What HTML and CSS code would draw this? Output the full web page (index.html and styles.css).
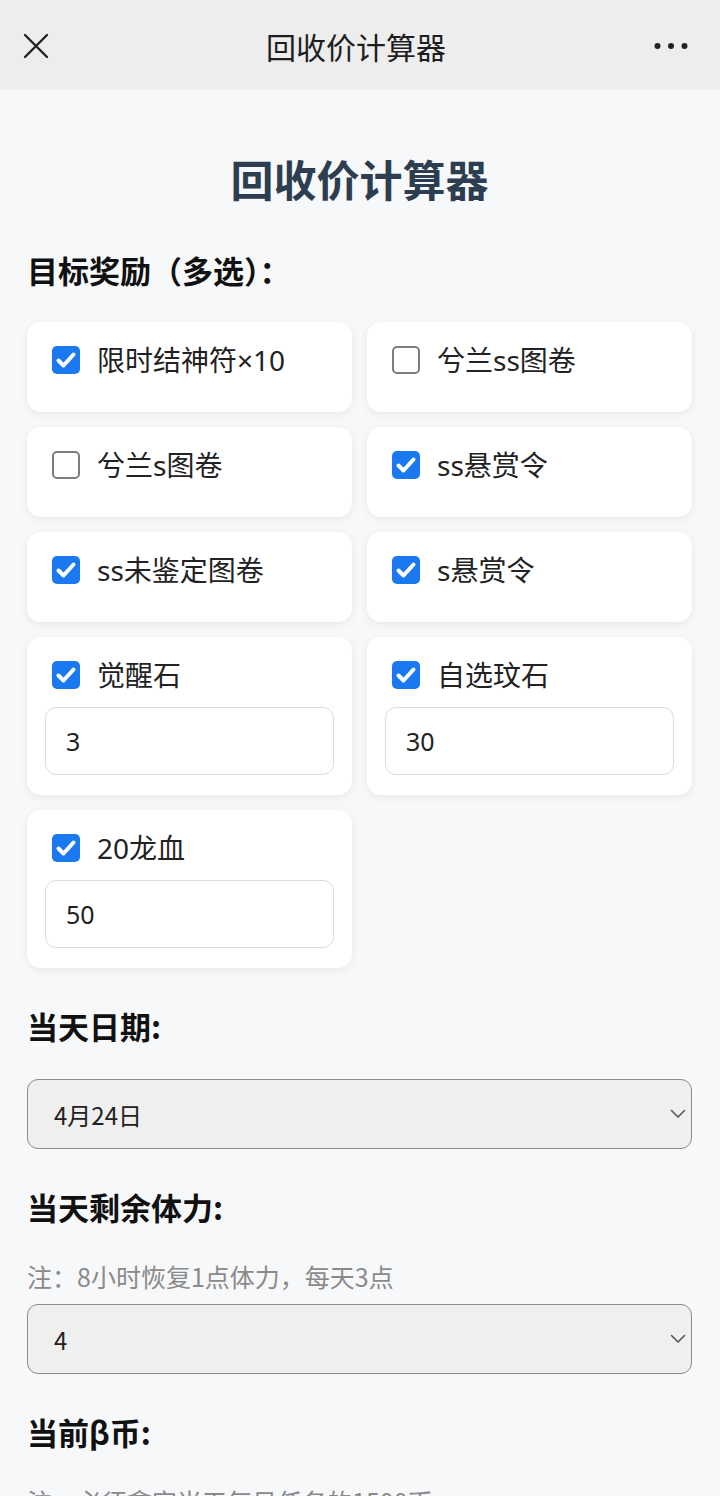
FILE: index.html
```html
<!DOCTYPE html>
<html lang="zh-CN">
<head>
<meta charset="utf-8">
<title>回收价计算器</title>
<link rel="stylesheet" href="styles.css">
</head>
<body>
<header class="topbar">
  <svg class="close-icon" width="28" height="28" viewBox="0 0 28 28"><path d="M3 3 L25 25 M25 3 L3 25" stroke="#222" stroke-width="2.4" stroke-linecap="round" fill="none"/></svg>
  <div class="topbar-title">回收价计算器</div>
  <svg class="more-icon" width="34" height="8" viewBox="0 0 34 8"><circle cx="3.5" cy="4" r="3"/><circle cx="17" cy="4" r="3"/><circle cx="30.5" cy="4" r="3"/></svg>
</header>
<main class="page">
  <h1 class="title">回收价计算器</h1>
  <div class="section-label first">目标奖励（多选）：</div>
  <div class="grid">
    <div class="card"><div class="opt"><span class="box on"><svg viewBox="0 0 28 28"><path d="M6.5 14.5 L11.5 19.5 L21.5 8.5" stroke="#fff" stroke-width="4" fill="none" stroke-linecap="round" stroke-linejoin="round"/></svg></span><span>限时结神符×10</span></div></div>
    <div class="card"><div class="opt"><span class="box"></span><span>兮兰ss图卷</span></div></div>
    <div class="card"><div class="opt"><span class="box"></span><span>兮兰s图卷</span></div></div>
    <div class="card"><div class="opt"><span class="box on"><svg viewBox="0 0 28 28"><path d="M6.5 14.5 L11.5 19.5 L21.5 8.5" stroke="#fff" stroke-width="4" fill="none" stroke-linecap="round" stroke-linejoin="round"/></svg></span><span>ss悬赏令</span></div></div>
    <div class="card"><div class="opt"><span class="box on"><svg viewBox="0 0 28 28"><path d="M6.5 14.5 L11.5 19.5 L21.5 8.5" stroke="#fff" stroke-width="4" fill="none" stroke-linecap="round" stroke-linejoin="round"/></svg></span><span>ss未鉴定图卷</span></div></div>
    <div class="card"><div class="opt"><span class="box on"><svg viewBox="0 0 28 28"><path d="M6.5 14.5 L11.5 19.5 L21.5 8.5" stroke="#fff" stroke-width="4" fill="none" stroke-linecap="round" stroke-linejoin="round"/></svg></span><span>s悬赏令</span></div></div>
    <div class="card"><div class="opt"><span class="box on"><svg viewBox="0 0 28 28"><path d="M6.5 14.5 L11.5 19.5 L21.5 8.5" stroke="#fff" stroke-width="4" fill="none" stroke-linecap="round" stroke-linejoin="round"/></svg></span><span>觉醒石</span></div><input class="num" type="text" value="3"></div>
    <div class="card"><div class="opt"><span class="box on"><svg viewBox="0 0 28 28"><path d="M6.5 14.5 L11.5 19.5 L21.5 8.5" stroke="#fff" stroke-width="4" fill="none" stroke-linecap="round" stroke-linejoin="round"/></svg></span><span>自选玟石</span></div><input class="num" type="text" value="30"></div>
    <div class="card"><div class="opt"><span class="box on"><svg viewBox="0 0 28 28"><path d="M6.5 14.5 L11.5 19.5 L21.5 8.5" stroke="#fff" stroke-width="4" fill="none" stroke-linecap="round" stroke-linejoin="round"/></svg></span><span>20龙血</span></div><input class="num" type="text" value="50"></div>
  </div>

  <div class="group">
    <div class="section-label">当天日期:</div>
    <div class="select-wrap">
      <select class="select"><option>4月24日</option></select>
      <svg class="chev" width="16" height="10" viewBox="0 0 16 10"><path d="M1.5 1.5 L8 8 L14.5 1.5" stroke="#555" stroke-width="1.6" fill="none" stroke-linecap="round" stroke-linejoin="round"/></svg>
    </div>
  </div>

  <div class="group">
    <div class="section-label">当天剩余体力:</div>
    <div class="note">注：8小时恢复1点体力，每天3点</div>
    <div class="select-wrap">
      <select class="select"><option>4</option></select>
      <svg class="chev" width="16" height="10" viewBox="0 0 16 10"><path d="M1.5 1.5 L8 8 L14.5 1.5" stroke="#555" stroke-width="1.6" fill="none" stroke-linecap="round" stroke-linejoin="round"/></svg>
    </div>
  </div>

  <div class="group">
    <div class="section-label">当前β币:</div>
    <div class="note">注：必须拿完当天每日任务的1500币</div>
  </div>
</main>
</body>
</html>
```

FILE: styles.css
```css
* { box-sizing: border-box; }
html, body { margin: 0; padding: 0; }
body {
  background: #f7f8fa;
  font-family: "Noto Sans CJK SC", "Noto Sans", sans-serif;
  color: #222;
  width: 720px;
}
.topbar {
  height: 90px;
  background: #ededed;
  display: flex;
  align-items: center;
  justify-content: space-between;
  padding: 2px 32px 0 22px;
}
.close-icon { display: block; }
.topbar-title {
  font-size: 30px;
  color: #1e1e1e;
  margin-left: 8px;
}
.more-icon { fill: #222; display: block; }
.page {
  padding: 63px 28px 0 27px;
}
.title {
  margin: 0;
  text-align: center;
  font-size: 43px;
  line-height: 50px;
  font-weight: 700;
  color: #2c3e50;
}
.section-label {
  font-size: 31px;
  line-height: 40px;
  font-weight: 700;
  color: #111;
  margin-bottom: 33px;
}
.section-label.first { margin-top: 47px; margin-bottom: 32px; }
.grid {
  display: grid;
  grid-template-columns: 1fr 1fr;
  column-gap: 15px;
  row-gap: 15px;
  align-items: start;
}
.card {
  background: #fff;
  border-radius: 14px;
  padding: 18px 18px 20px;
  box-shadow: 0 2px 8px rgba(0,0,0,0.07);
}
.opt {
  display: flex;
  align-items: center;
  height: 40px;
  padding-left: 7px;
  gap: 17px;
  font-family: "Noto Sans", "Noto Sans CJK SC", sans-serif;
  font-size: 28px;
  line-height: 40px;
  color: #222;
  margin-bottom: 12px;
}
.box {
  width: 28px;
  height: 28px;
  border-radius: 5px;
  border: 2px solid #7d7d7d;
  background: #fff;
  flex: none;
  display: block;
}
.box.on {
  border: none;
  background: #1a78f0;
}
.box svg { width: 28px; height: 28px; display: block; }
.num {
  display: block;
  width: 100%;
  height: 68px;
  margin: 3px 0 0;
  border: 1.5px solid #dcdcdc;
  border-radius: 11px;
  padding: 0 20px;
  font-family: "Noto Sans", "Noto Sans CJK SC", sans-serif;
  font-size: 25px;
  color: #222;
  background: #fff;
  outline: none;
}
.group { margin-top: 38px; }
.note {
  font-size: 25px;
  line-height: 32px;
  color: #8a8a8a;
  margin-bottom: 12px;
}
.select-wrap { position: relative; }
.select {
  -webkit-appearance: none;
  appearance: none;
  display: block;
  width: 100%;
  height: 70px;
  margin: 0;
  background: #efefef;
  border: 1.5px solid #8c8c8c;
  border-radius: 11px;
  padding: 0 26px;
  font-family: "Noto Sans CJK SC", sans-serif;
  font-size: 24px;
  color: #222;
  outline: none;
}
.chev {
  position: absolute;
  right: 6px;
  top: 30px;
  pointer-events: none;
}
```
